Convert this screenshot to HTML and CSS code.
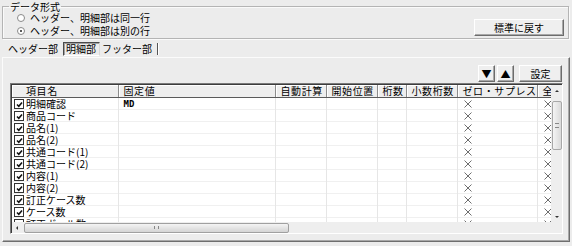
FILE: index.html
```html
<!DOCTYPE html>
<html lang="ja">
<head>
    <meta charset="UTF-8">
    <title>データ形式</title>
    <link rel="stylesheet" href="styles.css">
</head>
<body>
    <fieldset class="format">
        <legend>データ形式</legend>
        <div class="format-body">
            <div class="radios">
                <label class="radio"><span class="dot"></span>ヘッダー、明細部は同一行</label>
                <label class="radio checked"><span class="dot"></span>ヘッダー、明細部は別の行</label>
            </div>
            <button class="btn reset">標準に戻す</button>
        </div>
    </fieldset>

    <div class="tabs">
        <span class="tab">ヘッダー部</span>
        <span class="tab active">明細部</span>
        <span class="tab last">フッター部</span>
    </div>

    <div class="panel">
        <div class="toolbar">
            <button class="btn arrow">▼</button>
            <button class="btn arrow">▲</button>
            <button class="btn setting">設定</button>
        </div>

        <div class="grid">
            <div class="sheet">
                <table>
                    <colgroup>
                        <col style="width:106px"><col style="width:157px"><col style="width:51px">
                        <col style="width:51px"><col style="width:29px"><col style="width:51px">
                        <col style="width:80px"><col style="width:40px">
                    </colgroup>
                    <thead>
                        <tr>
                            <th class="name">項目名</th>
                            <th>固定値</th>
                            <th>自動計算</th>
                            <th>開始位置</th>
                            <th>桁数</th>
                            <th>小数桁数</th>
                            <th>ゼロ・サプレス</th>
                            <th>全角</th>
                        </tr>
                    </thead>
                    <tbody id="rows"></tbody>
                </table>
            </div>
            <div class="vscroll">
                <span class="up"></span>
                <span class="thumb"><span class="grip"></span></span>
                <span class="down"></span>
            </div>
            <div class="hscroll">
                <span class="left"></span>
                <span class="thumb"><span class="grip"></span></span>
            </div>
            <div class="corner"></div>
        </div>
    </div>

    <script>
        const items = [
            ['明細確認', 'MD'], ['商品コード', ''], ['品名(1)', ''], ['品名(2)', ''],
            ['共通コード(1)', ''], ['共通コード(2)', ''], ['内容(1)', ''], ['内容(2)', ''],
            ['訂正ケース数', ''], ['ケース数', ''], ['訂正ボール数', '']
        ];
        const cross = '<svg width="8" height="8" viewBox="0 0 8 8"><path d="M0.5 0.5L7.5 7.5M7.5 0.5L0.5 7.5" stroke="#6e6e6e" stroke-width="1" fill="none"/></svg>';
        const check = '<span class="chk"><svg width="7" height="7" viewBox="0 0 7 7"><path d="M1 3.5L2.8 5.3L6 1.5" stroke="#111" stroke-width="1.6" fill="none"/></svg></span>';

        let html = '';
        items.forEach(([name, fixed]) => {
            html += '<tr>'
                + '<td class="name"><div class="cell">' + check + name + '</div></td>'
                + '<td class="fixed">' + fixed + '</td>'
                + '<td></td><td></td><td></td><td></td>'
                + '<td class="x">' + cross + '</td>'
                + '<td class="x">' + cross + '</td>'
                + '</tr>';
        });
        document.getElementById('rows').innerHTML = html;
    </script>
</body>
</html>
```

FILE: styles.css
```css
body {
    margin: 0;
    padding-top: 1px;
    width: 572px;
    height: 245px;
    overflow: hidden;
    background-color: #ececec;
    font-family: "Noto Sans CJK JP", sans-serif;
    font-size: 10px;
    color: #000;
}

/* Group box */
.format {
    margin: -1px 3px 0 2px;
    padding: 0 4px 1px 6px;
    border: 1px solid #b4b4b4;
    box-shadow: inset 1px 1px #fafafa, 1px 1px #fafafa;
}

.format legend {
    padding: 0 1px;
    line-height: 13px;
    height: 13px;
}

.format-body {
    display: flex;
    justify-content: space-between;
    align-items: flex-end;
    margin-top: -2px;
}

.radios {
    display: flex;
    flex-direction: column;
    padding-left: 8px;
}

.radio {
    display: flex;
    align-items: center;
    gap: 5px;
    height: 13px;
    line-height: 13px;
}

.dot {
    width: 6px;
    height: 6px;
    border: 1px solid #8a8a8a;
    border-radius: 50%;
    background-color: #fff;
    position: relative;
}

.radio.checked .dot::after {
    content: "";
    position: absolute;
    left: 2px;
    top: 2px;
    width: 2px;
    height: 2px;
    background-color: #222;
    border-radius: 50%;
}

.btn {
    font-family: inherit;
    font-size: 10px;
    color: #000;
    background-color: #efefef;
    border: 1px solid;
    border-color: #ffffff #6c6c6c #6c6c6c #ffffff;
    box-shadow: inset -1px -1px #a8a8a8;
    padding: 0;
    line-height: 14px;
}

.btn.reset {
    width: 90px;
    height: 17px;
    margin-bottom: 1px;
}

/* Tabs */
.tabs {
    display: flex;
    align-items: center;
    height: 17px;
    padding: 1px 0 0 8px;
}

.tab {
    line-height: 12px;
}

.tab.active {
    margin-left: 5px;
    padding: 0 3px 0 2px;
    height: 12px;
    border: 1px solid;
    border-color: #4a4a4a #d8d8d8 #ffffff #4a4a4a;
    box-shadow: inset 1px 1px #a0a0a0;
}

.tab.last {
    margin-left: 2px;
    padding-right: 5px;
    border-right: 1px solid #555;
    box-shadow: 1px 0 #fff;
}

/* Detail panel */
.panel {
    margin: 0 2px 0 2px;
    height: 176px;
    padding: 7px 6px 0 7px;
    border: 1px solid;
    border-color: #fbfbfb #6e6e6e #6e6e6e #fbfbfb;
    box-shadow: inset -1px -1px #a8a8a8;
}

.toolbar {
    display: flex;
    justify-content: flex-end;
    gap: 2px;
    padding-right: 1px;
    margin-bottom: 1px;
}

.btn.arrow {
    width: 17px;
    height: 17px;
    font-size: 10px;
    line-height: 14px;
}

.btn.setting {
    width: 43px;
    height: 17px;
    margin-left: 3px;
}

/* Data grid */
.grid {
    display: grid;
    grid-template-columns: 1fr 11px;
    grid-template-rows: 137px 11px;
    border: 1px solid;
    border-color: #7a7a7a #ffffff #ffffff #7a7a7a;
    box-shadow: inset 1px 1px #3c3c3c;
    padding: 1px 0 0 1px;
    background-color: #fff;
}

.sheet {
    overflow: hidden;
    background-color: #fff;
}

table {
    border-collapse: collapse;
    table-layout: fixed;
    width: 565px;
}

th {
    height: 12px;
    padding: 0 0 0 5px;
    font-weight: normal;
    text-align: left;
    line-height: 12px;
    letter-spacing: 0.6px;
    white-space: nowrap;
    background-color: #eeeeee;
    border-right: 1px solid #8c8c8c;
    border-bottom: 1px solid #5a5a5a;
    box-shadow: inset 1px 1px #fff;
}

th.name {
    padding-left: 14px;
}

td {
    height: 12px;
    padding: 0;
    line-height: 12px;
    white-space: nowrap;
    border-right: 1px solid #e6e6e6;
    background: linear-gradient(#f0f0f0, #f0f0f0) left bottom / 100% 1px no-repeat;
}

td.name {
    padding-left: 2px;
    border-right: none;
}

.cell {
    display: flex;
    align-items: center;
    gap: 2px;
    height: 12px;
}

td.fixed {
    padding-left: 5px;
    font-family: "DejaVu Sans Mono", monospace;
    font-size: 9px;
    font-weight: bold;
    border-left: 1px solid #e6e6e6;
}

td.x {
    padding-left: 6px;
}

td.x svg {
    display: block;
}

.chk {
    display: inline-flex;
    align-items: center;
    justify-content: center;
    width: 8px;
    height: 8px;
    border: 1px solid #333;
    background-color: #fff;
}

/* Scroll bars */
.vscroll,
.hscroll {
    display: flex;
    align-items: center;
    background-color: #eeeeee;
}

.vscroll {
    flex-direction: column;
    padding-top: 2px;
}

.vscroll .up,
.vscroll .down {
    width: 0;
    height: 0;
    border-left: 2px solid transparent;
    border-right: 2px solid transparent;
    margin: 3px 0;
}

.vscroll .up {
    border-bottom: 2px solid #333;
}

.vscroll .down {
    border-top: 2px solid #333;
    margin-top: auto;
    margin-bottom: 4px;
}

.vscroll .thumb {
    width: 8px;
    height: 47px;
    margin-top: 6px;
    border: 1px solid #a8a8a8;
    border-radius: 2px;
    background: linear-gradient(to right, #f4f4f4, #dadada);
    display: flex;
    align-items: center;
    justify-content: center;
}

.vscroll .grip {
    width: 4px;
    height: 3px;
    border-top: 1px solid #888;
    border-bottom: 1px solid #888;
}

.hscroll {
    padding-left: 4px;
}

.hscroll .left {
    width: 0;
    height: 0;
    border-top: 2px solid transparent;
    border-bottom: 2px solid transparent;
    border-right: 2px solid #333;
}

.hscroll .thumb {
    width: 263px;
    height: 8px;
    margin-left: 6px;
    border: 1px solid #a0a0a0;
    border-radius: 2px;
    background: linear-gradient(to bottom, #f4f4f4, #d4d4d4);
    display: flex;
    align-items: center;
    justify-content: center;
}

.hscroll .grip {
    width: 3px;
    height: 3px;
    border-left: 1px solid #888;
    border-right: 1px solid #888;
}

.corner {
    background-color: #eeeeee;
}
```
